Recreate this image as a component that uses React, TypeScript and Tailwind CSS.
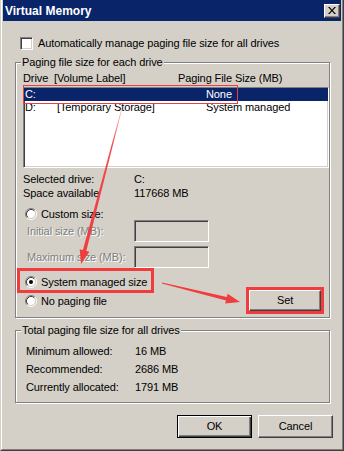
import type { ReactNode } from "react";

const sunken =
  "border border-t-[#808080] border-l-[#808080] border-r-white border-b-white shadow-[inset_1px_1px_0_#404040,inset_-1px_-1px_0_#d4d0c8]";

const raised =
  "border border-t-white border-l-white border-r-[#404040] border-b-[#404040] shadow-[inset_-1px_-1px_0_#808080]";

const etched =
  "border border-[#808080] shadow-[1px_1px_0_#ffffff,inset_1px_1px_0_#ffffff]";

function Radio({ checked = false }: { checked?: boolean }) {
  return (
    <svg width="12" height="12" viewBox="0 0 12 12" className="shrink-0">
      <circle cx="6" cy="6" r="4.2" fill="#ffffff" />
      <path d="M2.11 9.89 A5.5 5.5 0 0 1 9.89 2.11" fill="none" stroke="#808080" />
      <path d="M9.89 2.11 A5.5 5.5 0 0 1 2.11 9.89" fill="none" stroke="#ffffff" />
      <path d="M2.82 9.18 A4.5 4.5 0 0 1 9.18 2.82" fill="none" stroke="#404040" />
      <path d="M9.18 2.82 A4.5 4.5 0 0 1 2.82 9.18" fill="none" stroke="#d4d0c8" />
      {checked && <circle cx="6" cy="6" r="2" fill="#000000" />}
    </svg>
  );
}

function GroupBox({ label, height, children }: { label: string; height: string; children: ReactNode }) {
  return (
    <div className={`ml-[12px] w-[315px] ${height} ${etched}`}>
      <div className="-mt-[7px] ml-[5px] w-fit bg-[#d4d0c8] px-[1px] leading-[13px]">{label}</div>
      {children}
    </div>
  );
}

function Disabled({ children }: { children: ReactNode }) {
  return <span className="text-[#808080] [text-shadow:1px_1px_0_#ffffff]">{children}</span>;
}

export default function App() {
  const totals = [
    ["Minimum allowed:", "16 MB"],
    ["Recommended:", "2686 MB"],
    ["Currently allocated:", "1791 MB"],
  ];

  return (
    <div className="relative h-[451px] w-[344px] border-b border-l border-r border-b-[#404040] border-l-[#d4d0c8] border-r-[#404040] bg-[#d4d0c8] font-['Liberation_Sans',Arial,sans-serif] text-[11px] tracking-[-0.1px] text-black">
      <div className="flex h-full flex-col border-b border-l border-r border-b-[#808080] border-l-white border-r-[#808080] px-[1px]">
        {/* title bar */}
        <div className="flex h-[21px] shrink-0 items-center justify-between bg-[#0a246a] pl-[2px]">
          <span className="text-[12px] font-bold tracking-normal text-white">Virtual Memory</span>
          <div className={`mr-[1px] flex h-[14px] w-[16px] items-center justify-center bg-[#d4d0c8] ${raised}`}>
            <svg width="8" height="7" viewBox="0 0 8 7">
              <path d="M0 0h1.6l2.4 2.8L6.4 0H8L4.8 3.5 8 7H6.4L4 4.2 1.6 7H0l3.2-3.5z" fill="#000" />
            </svg>
          </div>
        </div>

        {/* auto manage */}
        <div className="ml-[17px] mt-[16px] flex h-[13px] items-center gap-[5px]">
          <div className={`h-[13px] w-[13px] bg-white ${sunken}`} />
          <span className="leading-[13px]">Automatically manage paging file size for all drives</span>
        </div>

        <div className="mt-[12px]">
          <GroupBox label="Paging file size for each drive" height="h-[256px]">
            <div className="ml-[7px] mt-[3px] flex leading-[13px]">
              <span className="w-[31px]">Drive</span>
              <span className="w-[124px]">[Volume Label]</span>
              <span>Paging File Size (MB)</span>
            </div>

            <div className={`ml-[7px] mt-[2px] h-[81px] w-[306px] bg-white ${sunken}`}>
              <div className="flex h-[13px] bg-[#0a246a] pl-[1px] leading-[13px] text-white">
                <span className="w-[181px]">C:</span>
                <span>None</span>
              </div>
              <div className="flex h-[13px] pl-[1px] leading-[13px]">
                <span className="w-[32px]">D:</span>
                <span className="w-[149px]">[Temporary Storage]</span>
                <span>System managed</span>
              </div>
            </div>

            <div className="ml-[7px] mt-[4px] leading-[14px]">
              <div className="flex">
                <span className="w-[111px]">Selected drive:</span>
                <span>C:</span>
              </div>
              <div className="flex">
                <span className="w-[111px]">Space available</span>
                <span>117668 MB</span>
              </div>
            </div>

            <div className="ml-[9px] mt-[8px] flex h-[12px] items-center gap-[4px]">
              <Radio />
              <span className="leading-[12px]">Custom size:</span>
            </div>

            <div className="ml-[11px] flex h-[22px] items-center">
              <span className="w-[107px]">
                <Disabled>Initial size (MB):</Disabled>
              </span>
              <div className={`h-[22px] w-[75px] ${sunken}`} />
            </div>
            <div className="ml-[11px] mt-[4px] flex h-[22px] items-center">
              <span className="w-[107px]">
                <Disabled>Maximum size (MB):</Disabled>
              </span>
              <div className={`h-[22px] w-[75px] ${sunken}`} />
            </div>

            <div className="ml-[9px] mt-[8px] flex">
              <div className="flex w-[224px] flex-col gap-[7px]">
                <div className="flex h-[12px] items-center gap-[4px]">
                  <Radio checked />
                  <span className="leading-[12px]">System managed size</span>
                </div>
                <div className="flex h-[12px] items-center gap-[4px]">
                  <Radio />
                  <span className="leading-[12px]">No paging file</span>
                </div>
              </div>
              <div className={`mt-[14px] flex h-[21px] w-[72px] items-center justify-center ${raised}`}>Set</div>
            </div>
          </GroupBox>
        </div>

        <div className="mt-[12px]">
          <GroupBox label="Total paging file size for all drives" height="h-[73px]">
            <div className="ml-[10px] mt-[5px] leading-[18px]">
              {totals.map(([label, value]) => (
                <div key={label} className="flex">
                  <span className="w-[109px]">{label}</span>
                  <span>{value}</span>
                </div>
              ))}
            </div>
          </GroupBox>
        </div>

        <div className="ml-[174px] mt-[12px] flex gap-[6px]">
          <div className="flex h-[23px] w-[75px] items-center justify-center border border-black shadow-[inset_1px_1px_0_#ffffff,inset_-1px_-1px_0_#404040,inset_-2px_-2px_0_#808080]">
            OK
          </div>
          <div className={`flex h-[23px] w-[75px] items-center justify-center ${raised}`}>Cancel</div>
        </div>
      </div>

      {/* annotations */}
      <div className="pointer-events-none absolute left-[22px] top-[85px] h-[19px] w-[215px] border border-[#f03c3c]" />
      <div className="pointer-events-none absolute left-[16px] top-[268px] h-[25px] w-[137px] border-[3px] border-[#f03c3c]" />
      <div className="pointer-events-none absolute left-[245px] top-[287px] h-[27px] w-[78px] border-[3px] border-[#f03c3c]" />
      <svg className="pointer-events-none absolute left-[-1px] top-0" width="344" height="451" viewBox="0 0 344 451">
        <defs>
          <linearGradient id="fade1" x1="123" y1="104" x2="81" y2="264" gradientUnits="userSpaceOnUse">
            <stop offset="0" stopColor="#f03c3c" stopOpacity="0.2" />
            <stop offset="0.25" stopColor="#f03c3c" stopOpacity="0.9" />
            <stop offset="1" stopColor="#f03c3c" />
          </linearGradient>
        </defs>
        <polygon
          points="122.7,103.9 82.9,250 79.7,249.2 81,264 89.4,251.7 86.3,251 123.3,104.1"
          fill="url(#fade1)"
        />
        <polygon
          points="162.1,282.4 226.8,297 227.6,293.8 240,302 225.2,303.6 226,300.4 161.9,283.6"
          fill="#f03c3c"
        />
      </svg>
    </div>
  );
}
